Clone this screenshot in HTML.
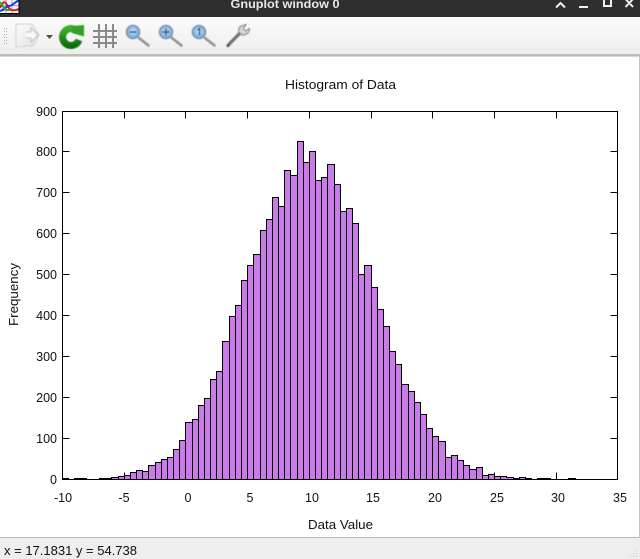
<!DOCTYPE html>
<html>
<head>
<meta charset="utf-8">
<style>
html,body{margin:0;padding:0;width:640px;height:559px;overflow:hidden;background:#fff}
svg{display:block}
text{font-family:"Liberation Sans",sans-serif;fill:#111;font-size:12.5px}
</style>
</head>
<body>
<svg width="640" height="559" viewBox="0 0 640 559" xmlns="http://www.w3.org/2000/svg">
<defs>
<linearGradient id="tb" x1="0" y1="0" x2="0" y2="1"><stop offset="0" stop-color="#fbfbfb"/><stop offset="1" stop-color="#eee"/></linearGradient>
<linearGradient id="page" x1="0" y1="0" x2="1" y2="1"><stop offset="0" stop-color="#fcfcfc"/><stop offset="1" stop-color="#e0e0e0"/></linearGradient>
<linearGradient id="green" x1="0" y1="0" x2="0" y2="1"><stop offset="0" stop-color="#3fae2a"/><stop offset="1" stop-color="#0b6e10"/></linearGradient>
<radialGradient id="lens" cx=".5" cy=".45" r=".6"><stop offset="0" stop-color="#cfe4f6"/><stop offset="1" stop-color="#5f9fd8"/></radialGradient>
<filter id="b" x="-10%" y="-10%" width="120%" height="120%"><feGaussianBlur stdDeviation="0.4"/></filter>
<path id="stairs" d="M111.5 479.5V477.5H118.5V476.5H124.5V475.5H130.5V472.5H136.5V470.5H142.5V471.5H148.5V465.5H155.5V462.5H161.5V459.5H167.5V457.5H173.5V449.5H179.5V440.5H185.5V422.5H192.5V419.5H198.5V405.5H204.5V398.5H210.5V379.5H216.5V371.5H222.5V341.5H229.5V316.5H235.5V305.5H241.5V280.5H247.5V265.5H253.5V254.5H260.5V230.5H266.5V219.5H272.5V197.5H278.5V206.5H284.5V170.5H290.5V175.5H297.5V141.5H303.5V162.5H309.5V151.5H315.5V180.5H321.5V177.5H327.5V164.5H334.5V184.5H340.5V211.5H346.5V208.5H352.5V223.5H358.5V274.5H364.5V265.5H371.5V287.5H377.5V309.5H383.5V326.5H389.5V351.5H395.5V364.5H401.5V384.5H408.5V391.5H414.5V402.5H420.5V414.5H426.5V428.5H432.5V436.5H438.5V441.5H445.5V457.5H451.5V455.5H457.5V460.5H463.5V465.5H469.5V469.5H476.5V467.5H482.5V475.5H488.5V474.5H494.5V476.5H506.5V477.5H513.5V478.5H519.5V477.5H525.5V478.5H531.5V479.5Z"/>
<clipPath id="inside"><use href="#stairs"/></clipPath>
</defs>

<rect width="640" height="17" fill="#2f2f2f"/>
<rect y="17" width="640" height="37" fill="url(#tb)"/>
<rect y="54" width="640" height="2" fill="#bcbcbc"/>
<rect y="56" width="640" height="1" fill="#d8d8d8"/>
<rect x="639" y="56" width="1" height="481" fill="#c4c4c4"/>
<rect y="537" width="640" height="1" fill="#b8b8b8"/>
<rect y="538" width="640" height="21" fill="#eee"/>

<rect width="19" height="13" fill="#eef2f8"/>
<path d="M0 5.5H19M0 10.5H19M6 0V13M12 0V13" stroke="#8a8a8a" stroke-width=".7"/>
<path d="M0 8C3 1 5 1 7 5S11 12 19 9" stroke="#e01818" stroke-width="2" fill="none"/>
<path d="M0 11C4 10 6 6 9 6S14 3 19 0" stroke="#1c3cd8" stroke-width="2" fill="none"/>
<path d="M0 2C3 6 5 11 9 10" stroke="#18a83c" stroke-width="1.8" fill="none"/>
<path d="M19 0V13.5H0" stroke="#000" fill="none"/>

<text x="285" y="8" text-anchor="middle" font-size="12" font-weight="bold" style="fill:#e8e8e8;font-size:12px" textLength="109" lengthAdjust="spacingAndGlyphs">Gnuplot window 0</text>
<path d="M556 7.5L560.5 3L565 7.5M579 7H588M604 -1H611V6H604ZM625.5 -1L633 7M633 -1L625.500 7" fill="none" stroke="#f0f0f0" stroke-width="2"/>

<path d="M4.500 28V44M6.500 28V44" stroke="#b4b4b4" stroke-dasharray="1 2"/>
<g filter="url(#b)">
<path d="M16 24H32L39 35L33 46H28L16 47Z" fill="url(#page)" stroke="#cfcfcf"/>
<path d="M26 32H31V28L38 35L31 42V38H26" fill="#fafafa" stroke="#bdbdbd"/>
<path d="M79 40A8.500 8.500 0 1 1 75 29.500" fill="none" stroke="url(#green)" stroke-width="7"/>
<path d="M72 26L84 25V36.500L72 33Z" fill="#35a025"/>
<path d="M139 38L148.500 45.500M172 38L181.500 45.500M205 38L214.500 45.500" stroke="#929292" stroke-width="2.600" stroke-linecap="round"/>
<g fill="url(#lens)" stroke="#7f93a8" stroke-width="1.600">
<circle cx="133" cy="32" r="6.500"/><circle cx="166" cy="32" r="6.500"/><circle cx="199" cy="32" r="6.500"/>
</g>
<path d="M129.500 32H136.500M162.500 32H169.500M166 28.500V35.500M197.500 30L199.500 28.500V35.500" stroke="#1f4f88" stroke-width="1.400" fill="none"/>
<path d="M228 45.500L241 32" stroke="#4a4a4a" stroke-width="3" stroke-linecap="round"/>
<path d="M229 45L240 33" stroke="#a0a0a0" stroke-width=".8"/>
<path d="M241 26L246 24.500L243.500 28.500L245.500 31L249.500 28.500C250 33 245 36 241 34.500L238.500 31.500C238.500 29 239 27 241 26Z" fill="#d6d6d6" stroke="#666" stroke-width=".8"/>
</g>
<path d="M46 35H53L49.500 39Z" fill="#4e4e4e"/>
<path d="M99 24V48M106 24V48M113 24V48M93 31H117M93 37H117M93 43H117" stroke="#8a8a8a" stroke-width="2"/>

<use href="#stairs" fill="#c97ce8"/>
<path clip-path="url(#inside)" stroke="#000" d="M118.500 130V480M124.500 130V480M130.500 130V480M136.500 130V480M142.500 130V480M148.500 130V480M155.500 130V480M161.500 130V480M167.500 130V480M173.500 130V480M179.500 130V480M185.500 130V480M192.500 130V480M198.500 130V480M204.500 130V480M210.500 130V480M216.500 130V480M222.500 130V480M229.500 130V480M235.500 130V480M241.500 130V480M247.500 130V480M253.500 130V480M260.500 130V480M266.500 130V480M272.500 130V480M278.500 130V480M284.500 130V480M290.500 130V480M297.500 130V480M303.500 130V480M309.500 130V480M315.500 130V480M321.500 130V480M327.500 130V480M334.500 130V480M340.500 130V480M346.500 130V480M352.500 130V480M358.500 130V480M364.500 130V480M371.500 130V480M377.500 130V480M383.500 130V480M389.500 130V480M395.500 130V480M401.500 130V480M408.500 130V480M414.500 130V480M420.500 130V480M426.500 130V480M432.500 130V480M438.500 130V480M445.500 130V480M451.500 130V480M457.500 130V480M463.500 130V480M469.500 130V480M476.500 130V480M482.500 130V480M488.500 130V480M494.500 130V480M500.500 130V480M513.500 130V480M519.500 130V480M525.500 130V480"/>
<use href="#stairs" fill="none" stroke="#000"/>
<path fill="#c97ce8" stroke="#000" d="M62.500 479.500V478.500H68.500V479.500ZM74.500 479.500V478.500H86.500V479.500ZM99.500 479.500V478.500H111.500V479.500ZM537.500 479.500V478.500H550.500V479.500ZM568.500 479.500V478.500H575.500V479.500Z"/>

<path fill="none" stroke="#000" shape-rendering="crispEdges" d="M62.500 111.500H617.500V479.500H62.500ZM62.500 438.500h7M62.500 397.500h7M62.500 356.500h7M62.500 315.500h7M62.500 274.500h7M62.500 233.500h7M62.500 192.500h7M62.500 151.500h7M617.500 438.500h-7M617.500 397.500h-7M617.500 356.500h-7M617.500 315.500h-7M617.500 274.500h-7M617.500 233.500h-7M617.500 192.500h-7M617.500 151.500h-7M124.500 479.500v-7M185.500 479.500v-7M247.500 479.500v-7M309.500 479.500v-7M371.500 479.500v-7M432.500 479.500v-7M494.500 479.500v-7M556.500 479.500v-7M124.500 111.500v7M185.500 111.500v7M247.500 111.500v7M309.500 111.500v7M371.500 111.500v7M432.500 111.500v7M494.500 111.500v7M556.500 111.500v7"/>

<g text-anchor="end">
<text x="57" y="116">900</text><text x="57" y="156">800</text><text x="57" y="197">700</text><text x="57" y="238">600</text><text x="57" y="279">500</text><text x="57" y="320">400</text><text x="57" y="361">300</text><text x="57" y="402">200</text><text x="57" y="443">100</text><text x="57" y="484">0</text>
</g>
<g text-anchor="middle">
<text x="63" y="502">-10</text><text x="124" y="502">-5</text><text x="188" y="502">0</text><text x="250" y="502">5</text><text x="312" y="502">10</text><text x="373" y="502">15</text><text x="435" y="502">20</text><text x="497" y="502">25</text><text x="558" y="502">30</text><text x="620" y="502">35</text>
</g>
<text x="285" y="89" textLength="111" lengthAdjust="spacingAndGlyphs">Histogram of Data</text>
<text x="308" y="529" textLength="65" lengthAdjust="spacingAndGlyphs">Data Value</text>
<text transform="translate(18,326) rotate(-90)" textLength="63" lengthAdjust="spacingAndGlyphs">Frequency</text>
<text x="4" y="555" style="font-size:13px" textLength="133" lengthAdjust="spacingAndGlyphs">x = 17.1831 y = 54.738</text>

<path d="M636.500 550V557M633.500 553V557M630.500 556V557" stroke="#c0c0c0" stroke-dasharray="1 2"/>
</svg>
</body>
</html>
